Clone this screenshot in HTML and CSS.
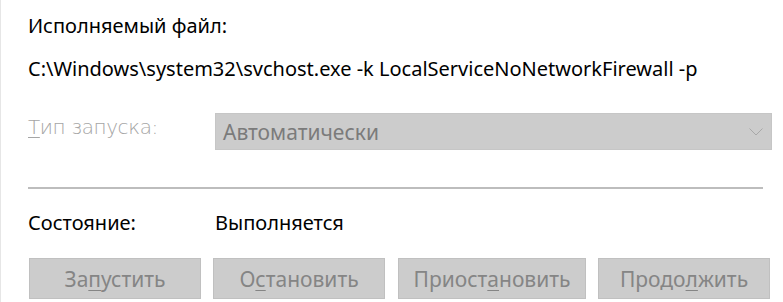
FILE: index.html
```html
<!DOCTYPE html>
<html lang="ru">
<head>
    <meta charset="UTF-8">
    <title>Свойства службы</title>
    <link rel="stylesheet" href="styles.css">
</head>
<body>
    <div class="panel">
        <div class="caption">Исполняемый файл:</div>
        <div class="path">C:\Windows\system32\svchost.exe -k LocalServiceNoNetworkFirewall -p</div>

        <div class="row startup">
            <span class="label disabled"><u>Т</u>ип запуска:</span>
            <div class="combo">
                <span>Автоматически</span>
                <svg class="chevron" width="14" height="8" viewBox="0 0 14 8">
                    <polyline points="0.5,0.5 7,7 13.5,0.5" fill="none" stroke="#a8a8a8" stroke-width="1"/>
                </svg>
            </div>
        </div>

        <div class="divider"></div>

        <div class="row status">
            <span class="label">Состояние:</span>
            <span>Выполняется</span>
        </div>

        <div class="buttons">
            <button class="btn" disabled>За<u>п</u>устить</button>
            <button class="btn" disabled>О<u>с</u>тановить</button>
            <button class="btn wide" disabled>Приост<u>а</u>новить</button>
            <button class="btn" disabled>Продо<u>л</u>жить</button>
        </div>
    </div>
</body>
</html>
```
FILE: styles.css
```css
body {
    margin: 0;
    background: #ffffff;
    font-family: "Noto Sans", "Open Sans", sans-serif;
    font-size: 20px;
    color: #000000;
}

.panel {
    height: 302px;
    box-sizing: border-box;
    border-left: 1px solid #e6e6e6;
    padding: 13px 0 0 27px;
}

.caption,
.path,
.status {
    line-height: 26px;
}

.path {
    margin-top: 17px;
}

.row {
    display: flex;
}

.label {
    width: 187px;
    flex-shrink: 0;
}

.label u,
.btn u {
    text-decoration-thickness: 1px;
    text-underline-offset: 3px;
}

.startup {
    margin-top: 31px;
    align-items: flex-start;
}

.disabled {
    margin-top: 4px;
    line-height: 20px;
    color: #a5a5a5;
    font-family: "DejaVu Sans", sans-serif;
    font-weight: 200;
    font-size: 20px;
    letter-spacing: -0.4px;
}

.combo {
    width: 557px;
    height: 37px;
    box-sizing: border-box;
    background: #cccccc;
    border: 1px solid #c6c6c6;
    display: flex;
    align-items: center;
    justify-content: space-between;
    padding: 0 8px 0 7px;
    line-height: 26px;
    color: #7b7b7b;
    font-size: 21px;
}

.divider {
    width: 735px;
    height: 2px;
    background: #bdbdbd;
    margin-top: 37px;
}

.status {
    margin-top: 21px;
}

.buttons {
    display: flex;
    margin-top: 22px;
    padding-left: 1px;
}

.btn {
    width: 172px;
    height: 41px;
    background: #cccccc;
    border: 1px solid #c0c0c0;
    color: #858585;
    font-family: "Noto Sans", "Open Sans", sans-serif;
    font-size: 21px;
    padding: 0;
}

.btn + .btn {
    margin-left: 12px;
}

.btn.wide {
    width: 188px;
    margin-left: 13px;
}
```
